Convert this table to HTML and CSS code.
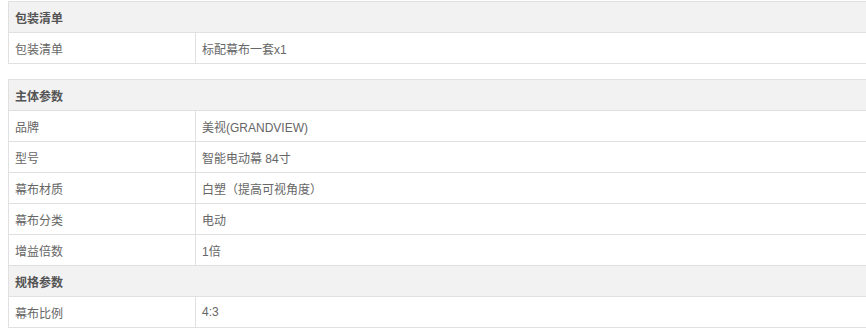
FILE: index.html
```html
<!DOCTYPE html>
<html lang="zh-CN">
<head>
<meta charset="utf-8">
<title>规格参数</title>
<link rel="stylesheet" href="styles.css">
</head>
<body>
<div class="page">
  <table class="spec">
    <colgroup><col class="ck"><col></colgroup>
    <tr class="head"><th colspan="2">包装清单</th></tr>
    <tr><td>包装清单</td><td>标配幕布一套x1</td></tr>
  </table>
  <table class="spec">
    <colgroup><col class="ck"><col></colgroup>
    <tr class="head"><th colspan="2">主体参数</th></tr>
    <tr><td>品牌</td><td>美视(GRANDVIEW)</td></tr>
    <tr><td>型号</td><td>智能电动幕 84寸</td></tr>
    <tr><td>幕布材质</td><td>白塑（提高可视角度）</td></tr>
    <tr><td>幕布分类</td><td>电动</td></tr>
    <tr><td>增益倍数</td><td>1倍</td></tr>
    <tr class="head"><th colspan="2">规格参数</th></tr>
    <tr><td>幕布比例</td><td>4:3</td></tr>
  </table>
</div>
</body>
</html>
```

FILE: styles.css
```css
html, body {
  margin: 0;
  padding: 0;
  background: #fff;
  overflow: hidden;
}
.page {
  padding: 1px 0 0 8px;
  display: flex;
  flex-direction: column;
  gap: 15px;
  width: 880px;
}
.spec {
  width: 870px;
  border-collapse: collapse;
  table-layout: fixed;
  font-family: "Liberation Sans", "Noto Sans CJK SC", sans-serif;
  font-size: 12px;
  color: #666;
}
.spec .ck {
  width: 187px;
}
.spec th, .spec td {
  border: 1px solid #e0e0e0;
  height: 31px;
  padding: 0 0 0 6px;
  text-align: left;
  vertical-align: middle;
  box-sizing: border-box;
}
.spec .head th {
  background: #f2f2f2;
  color: #555;
  font-weight: bold;
}
```
